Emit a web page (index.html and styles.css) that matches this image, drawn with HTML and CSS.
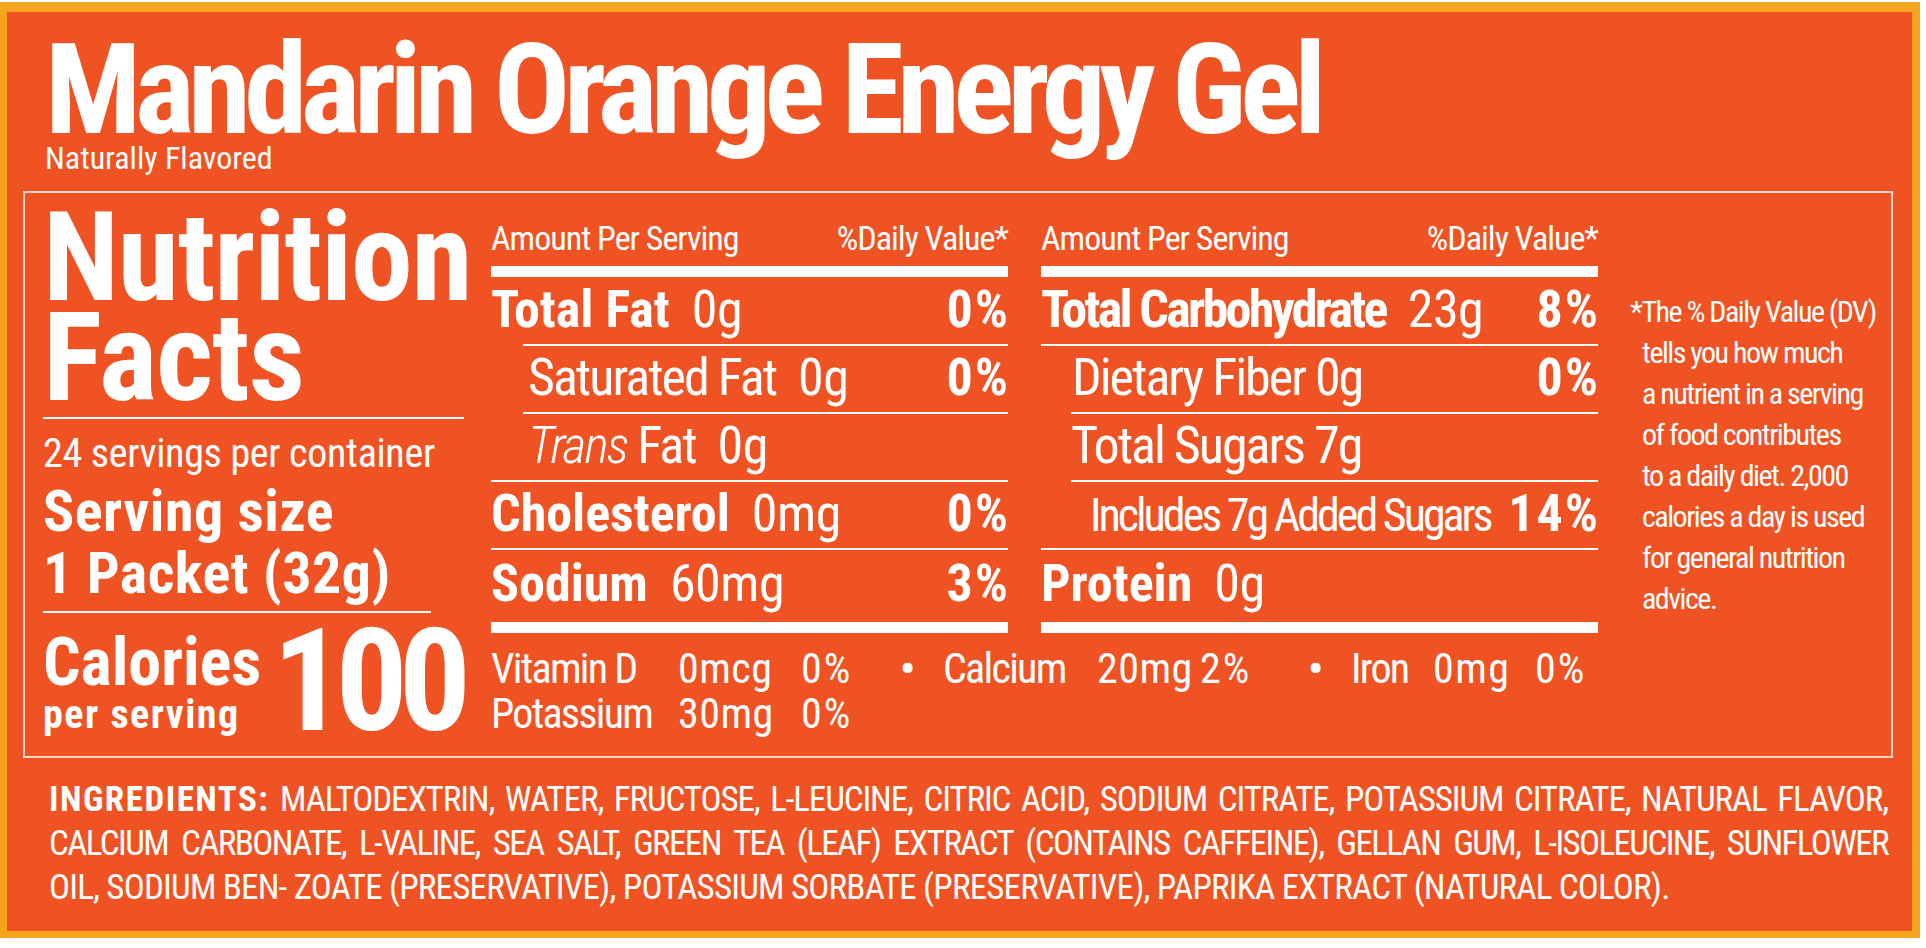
FILE: index.html
```html
<!DOCTYPE html>
<html lang="en">
<head>
<meta charset="utf-8">
<title>Mandarin Orange Energy Gel – Nutrition Facts</title>
<link rel="stylesheet" href="styles.css">
</head>
<body>
<div class="label">
  <header class="head">
    <h1 class="title">Mandarin Orange Energy Gel</h1>
    <p class="flavor">Naturally Flavored</p>
  </header>

  <section class="facts">
    <div class="summary">
      <h2 class="nf">Nutrition<br>Facts</h2>
      <p class="servings">24 servings per container</p>
      <div class="size">
        <div>Serving size</div>
        <div>1 Packet (32g)</div>
      </div>
      <div class="cal">
        <div class="cal-label">
          <div class="cal-word">Calories</div>
          <div class="cal-per">per serving</div>
        </div>
        <div class="cal-num">100</div>
      </div>
    </div>

    <div class="main">
      <div class="col col-a">
        <div class="col-head"><span>Amount Per Serving</span><span>%Daily Value*</span></div>
        <div class="row first"><span><b>Total Fat</b><span class="amt">0g</span></span><b class="pct">0%</b></div>
        <div class="row ind"><span>Saturated Fat<span class="amt">0g</span></span><b class="pct">0%</b></div>
        <div class="row ind"><span><i>Trans</i> Fat<span class="amt">0g</span></span></div>
        <div class="row"><span><b>Cholesterol</b><span class="amt">0mg</span></span><b class="pct">0%</b></div>
        <div class="row last"><span><b>Sodium</b><span class="amt">60mg</span></span><b class="pct">3%</b></div>
      </div>
      <div class="col col-b">
        <div class="col-head"><span>Amount Per Serving</span><span>%Daily Value*</span></div>
        <div class="row first"><span><b class="carb">Total Carbohydrate</b><span class="amt">23g</span></span><b class="pct">8%</b></div>
        <div class="row ind-text"><span>Dietary Fiber 0g</span><b class="pct">0%</b></div>
        <div class="row ind"><span>Total Sugars 7g</span></div>
        <div class="row ind ind2"><span class="added">Includes 7g Added Sugars</span><b class="pct">14%</b></div>
        <div class="row last"><span><b>Protein</b><span class="amt">0g</span></span></div>
      </div>
      <div class="micro">
        <span class="lbl">Vitamin D</span><span class="v">0mcg</span><span class="p">0%</span>
        <span class="dot">•</span><span class="lbl">Calcium</span><span class="v">20mg</span><span class="p">2%</span>
        <span class="dot">•</span><span class="lbl">Iron</span><span class="v wide">0mg</span><span class="p">0%</span>
        <span class="lbl">Potassium</span><span class="v">30mg</span><span class="p">0%</span>
      </div>
    </div>

    <aside class="note">
      <p>*The % Daily Value (DV)<br>tells you how much<br>a nutrient in a serving<br>of food contributes<br>to a daily diet. 2,000<br>calories a day is used<br>for general nutrition<br>advice.</p>
    </aside>
  </section>

  <div class="ingredients">
    <span class="ln just l1"><b>INGREDIENTS:</b> MALTODEXTRIN, WATER, FRUCTOSE, L-LEUCINE, CITRIC ACID, SODIUM CITRATE, POTASSIUM CITRATE, NATURAL FLAVOR,</span>
    <span class="ln just l2">CALCIUM CARBONATE, L-VALINE, SEA SALT, GREEN TEA (LEAF) EXTRACT (CONTAINS CAFFEINE), GELLAN GUM, L-ISOLEUCINE, SUNFLOWER</span>
    <span class="ln l3">OIL, SODIUM BEN- ZOATE (PRESERVATIVE), POTASSIUM SORBATE (PRESERVATIVE), PAPRIKA EXTRACT (NATURAL COLOR).</span>
  </div>
</div>
</body>
</html>
```
FILE: styles.css
```css
* { box-sizing: border-box; }

html, body {
  margin: 0;
  padding: 0;
  background: #ffffff;
}

body {
  font-family: "Roboto Condensed", "Roboto", "Liberation Sans", sans-serif;
  font-stretch: 75%;
  color: #ffffff;
}

.label {
  width: 1920px;
  height: 936px;
  margin-top: 2px;
  background: #f05323;
  border-style: solid;
  border-color: #f4a41f;
  border-width: 10px 8px 7px 7px;
}

/* ---------- header ---------- */
.head {
  padding: 25px 0 0 38px;
}

.title {
  margin: 0;
  font-size: 127px;
  line-height: 106px;
  font-weight: 700;
  letter-spacing: -6.5px;
}

.flavor {
  margin: 0;
  font-size: 32px;
  line-height: 30px;
  font-weight: 400;
}

/* ---------- facts box ---------- */
.facts {
  display: flex;
  height: 567px;
  margin: 18px 19px 0 16px;
  border: 2px solid rgba(255, 235, 225, 0.85);
}

.summary {
  width: 439px;
  padding: 15px 0 0 18px;
  flex: none;
}

.nf {
  margin: 0;
  font-size: 124px;
  line-height: 100px;
  font-weight: 700;
  letter-spacing: -1.2px;
  padding-bottom: 9px;
  border-bottom: 2px solid #ffffff;
}

.servings {
  margin: 13px 0 0;
  font-size: 40px;
  line-height: 44px;
  font-weight: 400;
  letter-spacing: -0.3px;
}

.size {
  width: 388px;
  margin-top: 4px;
  padding-bottom: 7px;
  border-bottom: 2px solid #ffffff;
  font-size: 58px;
  line-height: 62px;
  font-weight: 700;
  letter-spacing: 0.5px;
}

.cal {
  display: flex;
  justify-content: space-between;
  align-items: flex-start;
  margin-top: 22px;
}

.cal-word {
  font-size: 66px;
  line-height: 56px;
  font-weight: 700;
}

.cal-per {
  font-size: 40px;
  line-height: 48px;
  font-weight: 700;
  letter-spacing: 1.5px;
}

.cal-num {
  font-size: 143px;
  line-height: 92px;
  font-weight: 700;
  letter-spacing: -9px;
  margin-right: 2px;
}

/* ---------- main two columns ---------- */
.main {
  flex: none;
  width: 1107px;
  margin-left: 27px;
  padding-top: 25px;
  display: grid;
  grid-template-columns: 517px 557px;
  column-gap: 33px;
  align-content: start;
}

.col-head {
  display: flex;
  justify-content: space-between;
  font-size: 34px;
  line-height: 40px;
  letter-spacing: -1px;
  padding-bottom: 8px;
  border-bottom: 11px solid #ffffff;
}

.row {
  display: flex;
  justify-content: space-between;
  align-items: baseline;
  height: 68px;
  padding-top: 6px;
  border-top: 2px solid #ffffff;
  font-size: 52px;
  line-height: 52px;
  font-weight: 400;
  letter-spacing: -2px;
  white-space: nowrap;
}

.row b { font-weight: 700; letter-spacing: 0; }
.row i { font-style: italic; font-weight: 300; }
.row .pct { letter-spacing: 2px; margin-right: -2px; }

.row.first {
  height: 67px;
  padding-top: 7px;
  border-top: 0;
}

.col-a .row.ind { margin-left: 32px; padding-left: 5px; }
.col-b .row.ind { margin-left: 30px; padding-left: 0; }
.col-b .row.ind2 { padding-left: 19px; }
.row.ind-text { padding-left: 31px; }

.row.last {
  height: 85px;
  padding-top: 8px;
  border-bottom: 11px solid #ffffff;
}

.amt { margin-left: 22px; letter-spacing: -0.5px; }
.row .carb { letter-spacing: -2.7px; }

.added {
  font-size: 46px;
  letter-spacing: -3px;
}

.micro {
  grid-column: 1 / -1;
  display: grid;
  grid-template-columns: 187px 123px 99px 43px 154px 103px 108px 43px 82px 102px 1fr;
  margin-top: 13px;
  font-size: 42px;
  line-height: 45px;
  font-weight: 400;
  white-space: nowrap;
}

.micro .lbl { letter-spacing: -1.7px; }
.micro .v { letter-spacing: 0.5px; }
.micro .v.wide { letter-spacing: 1.5px; }
.micro .p { letter-spacing: 2px; }
.micro .dot { font-weight: 700; }

/* ---------- footnote ---------- */
.note {
  flex: none;
  margin-left: 32px;
  padding-top: 98px;
}

.note p {
  margin: 0;
  padding-left: 12px;
  text-indent: -12px;
  font-size: 30px;
  line-height: 41px;
  letter-spacing: -1.5px;
  font-weight: 400;
}

/* ---------- ingredients ---------- */
.ingredients {
  margin: 20px 24px 0 42px;
  font-size: 35px;
  line-height: 44px;
  font-weight: 400;
}

.ingredients b { font-weight: 700; letter-spacing: 1.5px; }

.ln { display: block; white-space: nowrap; }
.ln.just { text-align: justify; text-align-last: justify; }
.l1 { letter-spacing: -1.1px; }
.l2 { letter-spacing: -1.6px; }
.l3 { letter-spacing: -0.8px; }
```
